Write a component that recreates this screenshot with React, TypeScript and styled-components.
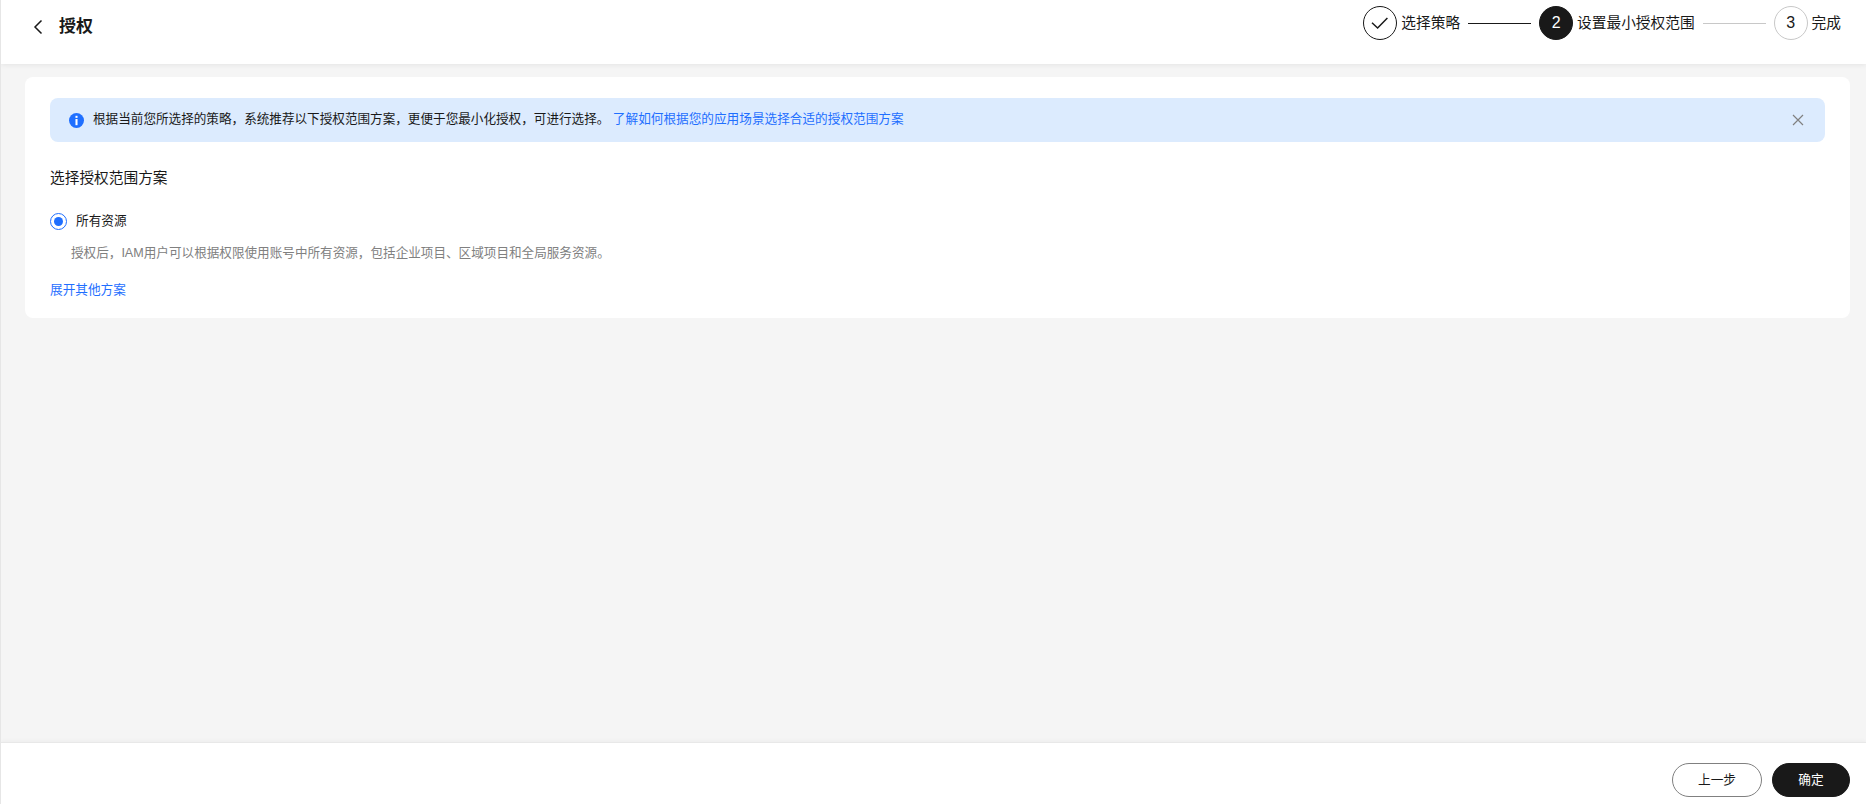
import React from "react";
import styled, { createGlobalStyle } from "styled-components";

const Global = createGlobalStyle`
  html, body { margin: 0; padding: 0; height: 100%; }
  body { font-family: "Liberation Sans", "Noto Sans CJK SC", sans-serif; color: #191919; background: #fff; }
  #root { height: 100%; }
  * { box-sizing: border-box; }
`;

const Page = styled.div`
  height: 804px;
  display: flex;
  flex-direction: column;
  background: #f5f5f5;
  border-left: 1px solid #e6e6e6;
  overflow: hidden;
`;

const Header = styled.header`
  height: 64px;
  flex: none;
  background: #fff;
  display: flex;
  justify-content: space-between;
  align-items: flex-start;
  padding: 6px 25px 0 31px;
  box-shadow: 0 1px 5px rgba(0, 0, 0, 0.07);
  position: relative;
`;

const TitleGroup = styled.div`
  display: flex;
  align-items: center;
  gap: 15px;
  height: 41px;
  color: #191919;
`;

const Title = styled.h1`
  margin: 0;
  font-size: 17px;
  font-weight: 700;
  line-height: 41px;
`;

const Steps = styled.div`
  display: flex;
  align-items: center;
`;

const StepCircle = styled.span<{ $state: "done" | "active" | "todo" }>`
  width: 34px;
  height: 34px;
  flex: none;
  border-radius: 50%;
  display: flex;
  align-items: center;
  justify-content: center;
  font-size: 16px;
  background: ${(p) => (p.$state === "active" ? "#191919" : "#fff")};
  color: ${(p) => (p.$state === "active" ? "#fff" : "#191919")};
  border: 1px solid ${(p) => (p.$state === "todo" ? "#c8c8c8" : "#191919")};
`;

const StepLabel = styled.span`
  font-size: 14.7px;
  line-height: 34px;
  margin-left: 4px;
  white-space: nowrap;
`;

const StepLine = styled.span<{ $on: boolean }>`
  width: 63px;
  height: 1px;
  margin: 0 8px;
  background: ${(p) => (p.$on ? "#191919" : "#c8c8c8")};
`;

const Main = styled.main`
  flex: 1;
  padding: 13px 16px 0 24px;
`;

const Card = styled.section`
  height: 241px;
  background: #fff;
  border-radius: 8px;
  padding: 21px 25px 0;
`;

const Alert = styled.div`
  height: 44px;
  border-radius: 8px;
  background: #dcebfe;
  display: flex;
  align-items: center;
  padding: 0 21px 0 19px;
  font-size: 12.6px;
  color: #191919;
`;

const AlertText = styled.span`
  margin: 0 0 6px 9px;
  flex: 1;
`;

const LinkText = styled.a`
  color: #1f6fff;
  text-decoration: none;
  font-size: 12.65px;
`;

const SectionTitle = styled.div`
  margin-top: 25px;
  font-size: 14.7px;
  line-height: 22px;
  color: #191919;
`;

const RadioRow = styled.label`
  display: flex;
  align-items: center;
  gap: 9px;
  margin-top: 22px;
  font-size: 12.67px;
  line-height: 20px;
`;

const RadioMark = styled.span`
  width: 17px;
  height: 17px;
  border-radius: 50%;
  border: 1px solid #1f6fff;
  display: flex;
  align-items: center;
  justify-content: center;
  &::after {
    content: "";
    width: 9px;
    height: 9px;
    border-radius: 50%;
    background: #1f6fff;
  }
`;

const Description = styled.div`
  margin: 12px 0 0 21px;
  font-size: 12.6px;
  line-height: 20px;
  color: #808080;
`;

const Expand = styled(LinkText)`
  display: block;
  margin-top: 17px;
  font-size: 12.67px;
  line-height: 20px;
`;

const Footer = styled.footer`
  height: 62px;
  flex: none;
  background: #fff;
  border-top: 1px solid #e8e8e8;
  box-shadow: 0 -1px 4px rgba(0, 0, 0, 0.04);
  position: relative;
  display: flex;
  justify-content: flex-end;
  gap: 10px;
  padding: 20px 16px 0 0;
`;

const Button = styled.button<{ $primary?: boolean }>`
  height: 34px;
  width: ${(p) => (p.$primary ? "78px" : "90px")};
  border-radius: 17px;
  font-family: inherit;
  font-size: 12.67px;
  padding: 0 0 3px;
  background: ${(p) => (p.$primary ? "#191919" : "#fff")};
  color: ${(p) => (p.$primary ? "#fff" : "#191919")};
  border: 1px solid ${(p) => (p.$primary ? "#191919" : "#808080")};
`;

const Check = () => (
  <svg width="20" height="20" viewBox="0 0 20 20" fill="none" stroke="#191919" strokeWidth="1.5">
    <path d="M2 9.8 L7.6 15 L17.4 5" />
  </svg>
);

const Back = () => (
  <svg width="12" height="16" viewBox="0 0 12 16" fill="none" stroke="#191919" strokeWidth="1.5">
    <path d="M9.5 1.5 L3 8 L9.5 14.5" />
  </svg>
);

const InfoIcon = () => (
  <svg width="15" height="15" viewBox="0 0 16 16">
    <circle cx="8" cy="8" r="8" fill="#1f6fff" />
    <rect x="6.9" y="3" width="2.2" height="2.2" fill="#fff" />
    <rect x="6.9" y="6.4" width="2.2" height="6.6" fill="#fff" />
  </svg>
);

const Close = () => (
  <svg width="12" height="12" viewBox="0 0 12 12" fill="none" stroke="#808080" strokeWidth="1.2">
    <path d="M1 1 L11 11 M11 1 L1 11" />
  </svg>
);

export default function App() {
  return (
    <>
      <Global />
      <Page>
        <Header>
          <TitleGroup>
            <Back />
            <Title>授权</Title>
          </TitleGroup>
          <Steps>
            <StepCircle $state="done"><Check /></StepCircle>
            <StepLabel>选择策略</StepLabel>
            <StepLine $on />
            <StepCircle $state="active">2</StepCircle>
            <StepLabel>设置最小授权范围</StepLabel>
            <StepLine $on={false} />
            <StepCircle $state="todo">3</StepCircle>
            <StepLabel>完成</StepLabel>
          </Steps>
        </Header>
        <Main>
          <Card>
            <Alert>
              <InfoIcon />
              <AlertText>
                根据当前您所选择的策略，系统推荐以下授权范围方案，更便于您最小化授权，可进行选择。{" "}
                <LinkText href="#">了解如何根据您的应用场景选择合适的授权范围方案</LinkText>
              </AlertText>
              <Close />
            </Alert>
            <SectionTitle>选择授权范围方案</SectionTitle>
            <RadioRow>
              <RadioMark />
              所有资源
            </RadioRow>
            <Description>授权后，IAM用户可以根据权限使用账号中所有资源，包括企业项目、区域项目和全局服务资源。</Description>
            <Expand href="#">展开其他方案</Expand>
          </Card>
        </Main>
        <Footer>
          <Button>上一步</Button>
          <Button $primary>确定</Button>
        </Footer>
      </Page>
    </>
  );
}
